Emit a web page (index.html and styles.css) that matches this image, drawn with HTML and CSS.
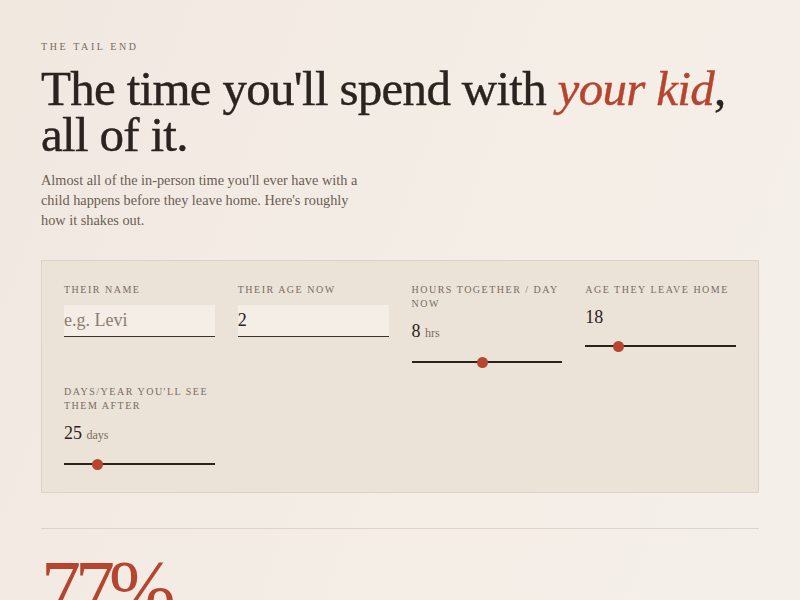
FILE: index.html
```html
<!DOCTYPE html>
<html lang="en">
<head>
    <meta charset="UTF-8">
    <meta name="viewport" content="width=device-width, initial-scale=1.0">
    <title>The Tail End</title>
    <link rel="stylesheet" href="styles.css">
</head>
<body>
    <div class="page">
        <p class="eyebrow">The Tail End</p>
        <h1 class="title">The time you'll spend with <em>your kid</em>, all of it.</h1>
        <p class="lede">Almost all of the in-person time you'll ever have with a child happens before they leave home. Here's roughly how it shakes out.</p>

        <form class="panel">
            <div class="field">
                <label for="kidName">Their name</label>
                <input type="text" id="kidName" class="text-input" placeholder="e.g. Levi">
            </div>
            <div class="field">
                <label for="kidAge">Their age now</label>
                <input type="text" id="kidAge" class="text-input" value="2">
            </div>
            <div class="field">
                <label for="hours">Hours together / day now</label>
                <div class="value">8 <span>hrs</span></div>
                <input type="range" id="hours" class="slider" min="1" max="16" value="8">
            </div>
            <div class="field">
                <label for="leaveAge">Age they leave home</label>
                <div class="value">18</div>
                <input type="range" id="leaveAge" class="slider" min="16" max="26" value="18">
            </div>
            <div class="field">
                <label for="daysAfter">Days/year you'll see them after</label>
                <div class="value">25 <span>days</span></div>
                <input type="range" id="daysAfter" class="slider" min="0" max="125" value="25">
            </div>
        </form>

        <hr class="divider">

        <div class="big-stat">77%</div>
    </div>
</body>
</html>
```

FILE: styles.css
```css
body {
    margin: 0;
    padding: 0;
    background-color: #f3ece4;
    background-image: linear-gradient(110deg, #f1e8e0 0%, #f4eee7 60%, #f4efe8 100%);
    color: #2a2320;
    font-family: "Liberation Serif", "Times New Roman", serif;
    height: 100vh;
    overflow: hidden;
}
.page {
    padding: 41px 41px 0;
}
.eyebrow {
    margin: 0;
    font-size: 10px;
    letter-spacing: 2.6px;
    text-transform: uppercase;
    color: #7a6a5e;
}
.title {
    margin: 14px 0 0;
    font-size: 49px;
    font-weight: normal;
    line-height: 46px;
    letter-spacing: -0.7px;
    color: #2a2320;
    -webkit-text-stroke: 0.4px #2a2320;
}
.title em {
    color: #b5452f;
    -webkit-text-stroke-color: #b5452f;
}
.lede {
    margin: 12px 0 0;
    max-width: 322px;
    font-size: 14.3px;
    line-height: 20px;
    color: #6b5d53;
}
.panel {
    margin-top: 30px;
    padding: 22px 22px 22px;
    background-color: #ebe3d8;
    border: 1px solid #ddd2c3;
    display: grid;
    grid-template-columns: repeat(4, 1fr);
    column-gap: 23px;
    row-gap: 17px;
}
.field {
    display: flex;
    flex-direction: column;
}
.field label {
    font-size: 10px;
    line-height: 14px;
    letter-spacing: 1.5px;
    text-transform: uppercase;
    color: #7a6b5f;
    margin-bottom: 2px;
}
.text-input {
    font-family: inherit;
    font-size: 18px;
    color: #2a2320;
    background-color: #f4eee6;
    border: none;
    border-bottom: 1px solid #3a322e;
    padding: 5px 0 5px;
    margin-top: 6px;
    outline: none;
    width: 100%;
    box-sizing: border-box;
}
.text-input::placeholder {
    color: #8a7d73;
}
.value {
    margin-top: 7px;
    font-size: 18px;
    line-height: 22px;
    color: #2a2320;
}
.value span {
    font-size: 12px;
    color: #7a6b5f;
}
.slider {
    -webkit-appearance: none;
    appearance: none;
    width: 100%;
    height: 12px;
    margin: 12px 0 0;
    background: transparent;
}
.slider::-webkit-slider-runnable-track {
    height: 2px;
    background-color: #2a2320;
}
.slider::-webkit-slider-thumb {
    -webkit-appearance: none;
    width: 11px;
    height: 11px;
    border-radius: 50%;
    background-color: #b8452e;
    margin-top: -4.5px;
    border: none;
}
.divider {
    margin: 35px 0 0;
    border: none;
    border-top: 1px solid #ddd3c7;
}
.big-stat {
    margin-top: 20px;
    font-size: 80px;
    line-height: 1;
    color: #b5452f;
    letter-spacing: -6px;
}
```
